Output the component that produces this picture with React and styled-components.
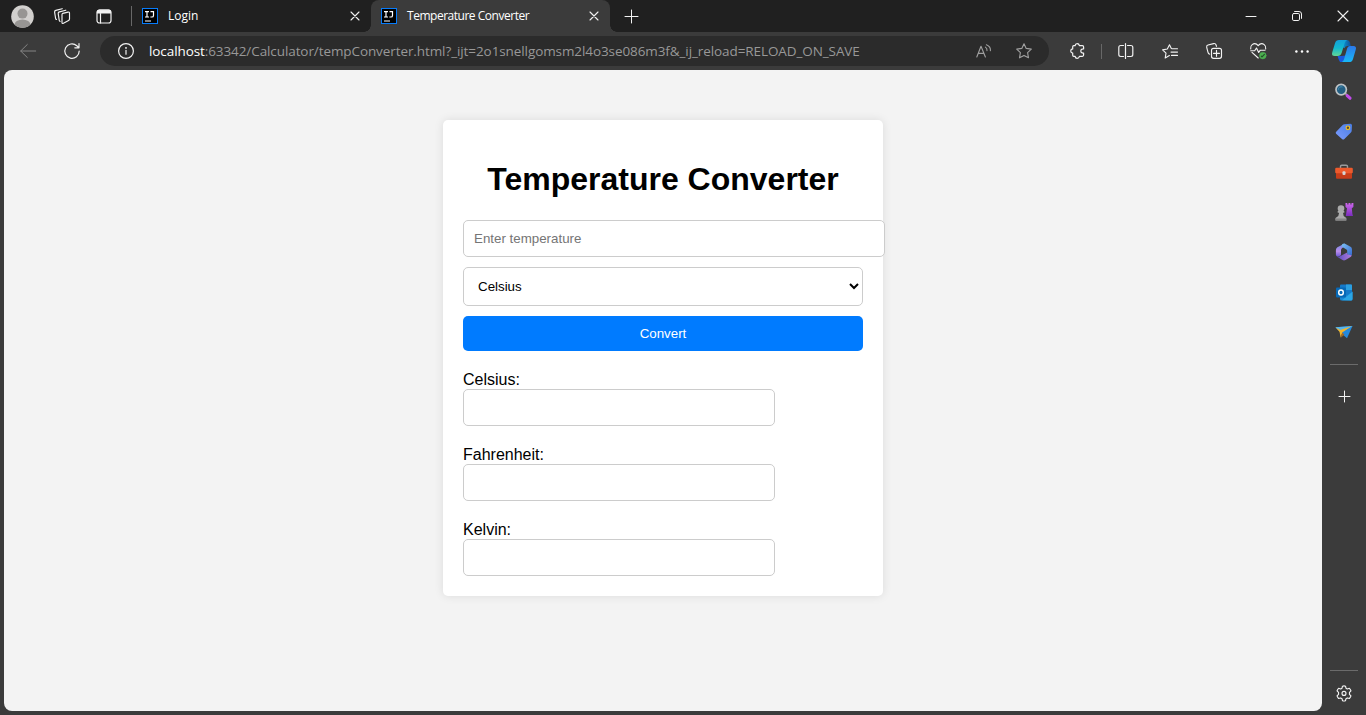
import React from 'react';
import styled, { createGlobalStyle } from 'styled-components';

const GlobalStyle = createGlobalStyle`
  * { box-sizing: border-box; }
  body { margin: 0; overflow: hidden; background: #3b3b3b; }
`;

const ui = `'Segoe UI', 'Open Sans', 'Noto Sans', sans-serif`;

const Browser = styled.div`
  width: 1366px;
  height: 715px;
  display: flex;
  flex-direction: column;
  background: #3b3b3b;
  color: #fff;
  font-family: ${ui};
`;

const TabBar = styled.header`
  display: flex;
  height: 32px;
  background: #202020;
`;

const Slot = styled.div`
  width: ${p => p.$w || 44}px;
  height: ${p => (p.$h ? p.$h + 'px' : 'auto')};
  flex: none;
  display: flex;
  align-items: center;
  justify-content: center;
  color: ${p => p.$color || '#f2f2f2'};
  svg { display: block; overflow: visible; }
`;

const Divider = styled.div`
  width: 1px;
  height: ${p => p.$h}px;
  margin: ${p => p.$m || 0};
  align-self: center;
  background: #686868;
`;

const Tab = styled.div`
  width: 239px;
  height: 32px;
  padding: 0 10px 0 10px;
  display: flex;
  align-items: center;
  position: relative;
  border-radius: 8px 8px 0 0;
  background: ${p => (p.$active ? '#3b3b3b' : 'transparent')};
  &::before, &::after {
    content: '';
    display: ${p => (p.$active ? 'block' : 'none')};
    position: absolute;
    bottom: 0;
    width: 7px;
    height: 7px;
  }
  &::before { left: -7px; background: radial-gradient(circle at 0 0, transparent 6.5px, #3b3b3b 7px); }
  &::after { right: -7px; background: radial-gradient(circle at 100% 0, transparent 6.5px, #3b3b3b 7px); }
`;

const TabTitle = styled.span`
  flex: 1;
  margin-left: 10px;
  font-size: 12px;
  line-height: 16px;
  letter-spacing: ${p => p.$spacing || 0}px;
  white-space: nowrap;
`;

const Spacer = styled.div`
  flex: 1;
`;

const Toolbar = styled.nav`
  display: flex;
  align-items: stretch;
  height: 38px;
  padding-left: 6px;
`;

const AddressBar = styled.div`
  width: 949px;
  height: 30px;
  margin: 4px 6px 4px;
  padding: 0 5px 0 4px;
  display: flex;
  border-radius: 15px;
  background: #2b2b2b;
`;

const Url = styled.div`
  flex: 1;
  margin-left: 1px;
  font-size: 13.5px;
  line-height: 30px;
  letter-spacing: -0.09px;
  white-space: nowrap;
  color: #989898;
  b { font-weight: 400; color: #fff; }
`;

const Body = styled.div`
  display: flex;
  flex: 1;
  min-height: 0;
`;

const Viewport = styled.main`
  width: 1318px;
  height: 641px;
  margin-left: 4px;
  padding-top: 50px;
  border-radius: 8px;
  background: #f3f3f3;
`;

const SideBar = styled.aside`
  width: 44px;
  padding: 2px 0 2px;
  display: flex;
  flex-direction: column;
  align-items: center;
`;

const Rule = styled.div`
  width: 28px;
  height: 1px;
  margin: ${p => p.$m};
  background: #6b6b6b;
`;

const Card = styled.form`
  width: 440px;
  height: 476px;
  margin: 0 auto;
  padding: 20px;
  border-radius: 5px;
  background: #fff;
  box-shadow: 0 0 10px rgba(0, 0, 0, 0.1);
  color: #000;
  font: 16px 'Liberation Sans', Arial, sans-serif;
`;

const Title = styled.h1`
  margin: 21px 0 22px;
  font-size: 32px;
  line-height: 37px;
  text-align: center;
  white-space: nowrap;
`;

const Field = styled.input`
  display: block;
  width: ${p => p.$w}px;
  height: 37px;
  padding: 10px;
  border: 1px solid #ccc;
  border-radius: 5px;
  background: #fff;
  font: 13.333px 'Liberation Sans', Arial, sans-serif;
  &::placeholder { color: #757575; opacity: 1; }
`;

const UnitSelect = styled.select`
  display: block;
  width: 400px;
  height: 39px;
  margin: 10px 0;
  padding: 10px;
  border: 1px solid #ccc;
  border-radius: 5px;
  background: #fff;
  color: #000;
  font: 13.333px 'Liberation Sans', Arial, sans-serif;
`;

const ConvertButton = styled.button`
  display: block;
  width: 400px;
  height: 35px;
  padding: 0;
  border: 0;
  border-radius: 5px;
  background: #007bff;
  color: #fff;
  font: 13.333px 'Liberation Sans', Arial, sans-serif;
`;

const Result = styled.label`
  display: block;
  margin-top: 20px;
  line-height: 18px;
`;

const Line = ({ w = 16, h = w, sw = 1, box, children }) => (
  <svg width={w} height={h} viewBox={box || `0 0 ${w} ${h}`} fill="none" stroke="currentColor" strokeWidth={sw} strokeLinecap="round" strokeLinejoin="round">
    {children}
  </svg>
);

const Avatar = () => (
  <svg width="23" height="23" viewBox="0 0 23 23">
    <defs><clipPath id="face"><circle cx="11.5" cy="11.5" r="11.3" /></clipPath></defs>
    <circle cx="11.5" cy="11.5" r="11.3" fill="#d2d0ce" />
    <g clipPath="url(#face)" fill="#979593">
      <circle cx="11.5" cy="8.6" r="5" />
      <ellipse cx="11.5" cy="19.8" rx="8" ry="5.2" />
    </g>
  </svg>
);

const Workspaces = () => (
  <Line w={16} h={16} sw={1.15}>
    <path d="M8.8 5.4 14 4.1Q15.5 3.8 15.5 5.2V11Q15.5 12 14.6 12.4L9.4 15.3Q8 15.9 8 14.4V6.5Q8 5.7 8.8 5.4Z" />
    <path d="M11.8 2.2 5.4 3.9Q4 4.3 4.2 5.6L5.2 12.2Q5.4 13.3 6.1 13.3" />
    <path d="M8.2.7 1.8 2.4Q.4 2.8.6 4.1L1.6 10.3Q1.8 11.4 2.5 11.4" />
  </Line>
);

const TabActions = () => (
  <Line w={16} h={15} sw={1.2}>
    <rect x="1" y="1" width="14" height="13" rx="2.5" />
    <path d="M1.5 3.2A2 2 0 0 1 3.5 1.2H12.5A2 2 0 0 1 14.5 3.2V4H1.5Z" fill="currentColor" />
    <path d="M4.5 4.5V14" />
  </Line>
);

const FaviconBox = styled.span`
  width: 16px;
  height: 16px;
  flex: none;
  padding: 1px 0 0 2px;
  border: 1px solid #087cfa;
  background: #000;
  svg { display: block; }
`;

const Favicon = () => (
  <FaviconBox>
    <svg width="11" height="12" viewBox="0 0 11 12" fill="none" stroke="#fff" strokeWidth="1.2">
      <path d="M0 1.6H4M2 1.6V7M0 7H4M5.5 1.6H8.5V5.4Q8.5 7 7 7H5.4M0 11H6" />
    </svg>
  </FaviconBox>
);

const Cross = ({ s = 8, sw = 1.1 }) => (
  <Line w={s} sw={sw}><path d={`M0 0 ${s} ${s}M${s} 0 0 ${s}`} /></Line>
);

const Plus = ({ s = 13 }) => (
  <Line w={s} sw={1}><path d={`M${s / 2} 0V${s}M0 ${s / 2}H${s}`} /></Line>
);

const Back = () => <Line w={16} h={14}><path d="M7.3.5.7 7l6.6 6.5M.8 7H15.7" /></Line>;

const Reload = () => (
  <Line w={16} h={16} sw={1.2}><path d="M15.2 8A7.2 7.2 0 1 1 12.8 2.7L15 4.7M15 .6V4.8H10.8" /></Line>
);

const Info = () => (
  <Line w={16} sw={1.2}>
    <circle cx="8" cy="8" r="7.4" />
    <path d="M8 7.4V11.2" />
    <circle cx="8" cy="4.9" r=".35" fill="currentColor" />
  </Line>
);

const ReadAloud = () => (
  <Line w={16} h={14} sw={1.1}>
    <path d="M.8 13 5 2.2 9.4 13M2.3 9.4H7.8M9.4 3.1Q11.3 4.4 11 6.6M10.4.8Q14.9 2.6 14.4 6.8" />
  </Line>
);

const starPath = 'M8 .8 10.2 5.4 15.3 6.1 11.6 9.7 12.5 14.8 8 12.4 3.5 14.8 4.4 9.7 .7 6.1 5.8 5.4Z';
const Star = () => <Line w={16} h={16} sw={1.1}><path d={starPath} /></Line>;

const Puzzle = () => (
  <Line w={15} h={16} sw={1.2}>
    <path d="M3.7 2.7H5.1C5.3 1.3 6.2.7 7.2.7S9.1 1.3 9.4 2.7H12.4Q13.6 2.7 13.6 3.9V6C11.6 5.8 10.8 6.8 10.8 8S11.6 10.2 13.6 10V12.1Q13.6 13.3 12.4 13.3H9.4C9.1 14.7 8.2 15.3 7.2 15.3S5.3 14.7 5.1 13.3H3.7Q2.7 13.3 2.7 12.3V10.1C1.3 9.9.7 9 .7 8S1.3 6.1 2.7 5.9V3.7Q2.7 2.7 3.7 2.7" />
  </Line>
);

const Split = () => (
  <Line w={16} h={16} sw={1.2}>
    <path d="M5.5 2.5H2.7Q.8 2.5.8 4.4V11.6Q.8 13.5 2.7 13.5H5.5M9.5 2.5H12.9Q14.8 2.5 14.8 4.4V11.6Q14.8 13.5 12.9 13.5H9.5M7.5 .5V15.5" />
  </Line>
);

const Favorites = () => (
  <Line w={16} h={15} sw={1.1}>
    <path d="M9.3 4.5 7.5.8 5.3 5 .6 5.9 4 9.2 3.2 14 7.4 11.6M10 4.8H15.5M9 8.1H15.5M9.5 11.4H15.5" />
  </Line>
);

const Collections = () => (
  <Line w={16} h={16} sw={1.15}>
    <rect x="5.5" y="5.3" width="10" height="10" rx="2" />
    <path d="M10.5 7.3V13.3M7.5 10.3H13.5M3.7 11.2Q2.3 10.8 2 9.4L.7 4.3Q.3 2.5 2 2L7.6.6Q9.5.2 10.1 2L10.5 3.3" />
  </Line>
);

const Health = () => (
  <Line w={17} h={16} sw={1.15}>
    <path d="M.7 6Q.2 3.1 2.2 1.6C4.2.2 6.4.5 8.2 2.7 10 .5 12.2.2 14.2 1.6Q16.2 3.1 15.7 6M2 9.3 8.2 15M.7 7.7H4.7L6.5 5 8.7 9.5 10.3 7.2H15" />
    <circle cx="12.8" cy="12.6" r="3.4" fill="#4caf50" stroke="#4caf50" strokeWidth=".4" />
    <path d="m11.3 13.1.7.7 2.4-2.5" stroke="#234f28" />
  </Line>
);

const Dots = () => (
  <svg width="14" height="3" viewBox="0 0 14 3" fill="#fff">
    <circle cx="1.4" cy="1.5" r="1.2" /><circle cx="7" cy="1.5" r="1.2" /><circle cx="12.6" cy="1.5" r="1.2" />
  </svg>
);

const Copilot = () => (
  <svg width="24" height="23" viewBox="0 0 24 23">
    <defs>
      <linearGradient id="cpA" x1="0" y1="0" x2="0" y2="1"><stop stopColor="#149fd9" /><stop offset=".5" stopColor="#12b9cf" /><stop offset="1" stopColor="#63d794" /></linearGradient>
      <linearGradient id="cpB" x1="0" y1="0" x2="0" y2="1"><stop stopColor="#2c78e8" /><stop offset="1" stopColor="#18b9f7" /></linearGradient>
      <linearGradient id="cpC"><stop stopColor="#0a97d6" /><stop offset="1" stopColor="#124e94" /></linearGradient>
    </defs>
    <path d="M11 0H15Q17.3 0 18 2.6L18.8 6H15.6Q13.2 6 12.4 8.2L10.5 7Z" fill="url(#cpC)" />
    <path d="M5.6 16.1H9.5L13.4 15.5 12.5 22.1H9.7Q7.4 22.1 6.7 19.4Z" fill="#1959df" />
    <path d="M7 0H15Q13.4.7 12.6 3.2L9.7 12.8Q8.6 16.1 5.6 16.1H2.8Q-.8 16.1.2 12.6L3 3.2Q4 0 7 0Z" fill="url(#cpA)" />
    <path d="M18 6H21.4Q24.8 6 23.8 9.5L21 18.9Q20 22.1 17 22.1H9.8Q11.4 21.4 12.1 19L14.9 9.3Q15.8 6 18 6Z" fill="url(#cpB)" />
  </svg>
);

const SearchIcon = () => (
  <svg width="18" height="18" viewBox="0 0 18 18">
    <path d="M10 10 12.2 12.2" stroke="#9a9a9a" strokeWidth="1.8" />
    <path d="M12.2 12.6 15 15.2" stroke="#c04be9" strokeWidth="3.2" strokeLinecap="round" />
    <circle cx="6.2" cy="6.6" r="5.2" fill="#245f83" stroke="#bdc2c5" strokeWidth="1.7" />
    <path d="M3.3 6.8A3 3 0 0 1 7.5 4" stroke="#438bb0" fill="none" />
  </svg>
);

const TagIcon = () => (
  <svg width="18" height="18" viewBox="0 0 18 18">
    <defs><linearGradient id="tag" x1="1" y1="0" x2="0" y2="1"><stop stopColor="#487de4" /><stop offset="1" stopColor="#7d9cff" /></linearGradient></defs>
    <path d="M9.4 1.2 15.4.7Q17 .7 17 2.3L16.7 7.7Q16.6 8.7 15.9 9.4L9.4 16Q8.2 17.2 7 16L1.1 10.8Q.2 9.8 1.2 8.7L7.7 2Q8.4 1.3 9.4 1.2Z" fill="url(#tag)" />
    <circle cx="12.9" cy="4.8" r="1.8" fill="#564a32" stroke="#f1bf22" strokeWidth="1.2" />
  </svg>
);

const ToolboxIcon = () => (
  <svg width="18" height="16" viewBox="0 0 18 16">
    <path d="M5.5 4V2.5Q5.5 1.2 6.8 1.2H11.2Q12.5 1.2 12.5 2.5V4" stroke="#9a9b9c" strokeWidth="1.4" fill="none" />
    <rect x="1" y="8" width="16" height="6.8" rx="1" fill="#c63d1a" />
    <path d="M1.3 3.8H16.7Q17.8 3.8 17.8 5V8.2Q17.8 9.2 16.5 9.2H1.5Q.2 9.2.2 8.2V5Q.2 3.8 1.3 3.8Z" fill="#ed5a2c" />
    <rect x="7.5" y="7.3" width="3" height="3.6" rx="1" fill="#d5d5d5" />
  </svg>
);

const GamesIcon = () => (
  <svg width="19" height="18" viewBox="0 0 19 18">
    <defs><linearGradient id="rook" x1="0" y1="0" x2="0" y2="1"><stop stopColor="#cf67ed" /><stop offset="1" stopColor="#7b2dbe" /></linearGradient></defs>
    <path d="M10.5 0H12.3V1.5H13.5V0H15.4V1.5H16.5V0H18.4V4L16.8 5.2 17.4 11 18 13H10.8L12 5.2 10.5 4Z" fill="url(#rook)" />
    <g fill="#aaa"><circle cx="6" cy="5.5" r="3.3" /><path d="M2.7 8.1H9.3V9.8H8L8.7 13 11.3 15V17.5H.5V15L3.3 13 4.1 9.8H2.7Z" /></g>
    <path d="M.5 15.5H11.3V17.5H.5Z" fill="#858585" />
  </svg>
);

const OfficeIcon = () => (
  <svg width="18" height="18" viewBox="0 0 18 18">
    <defs>
      <linearGradient id="office" x1="0" y1="0" x2="0" y2="1"><stop stopColor="#6f8ee6" /><stop offset=".6" stopColor="#b98bea" /><stop offset="1" stopColor="#6857d5" /></linearGradient>
      <linearGradient id="officeR" x1="0" y1="0" x2="1" y2="1"><stop stopColor="#7cc0f3" /><stop offset="1" stopColor="#3568cf" /></linearGradient>
      <linearGradient id="officeB"><stop stopColor="#5b4fc0" /><stop offset="1" stopColor="#b47be0" /></linearGradient>
    </defs>
    <path d="M9.8.5 2.4 4.3Q.9 5.2.9 7V11.5Q.9 14 3.4 13.6L6 12.3V7.2Q6 5.7 7.2 5L10.5 3Z" fill="url(#office)" />
    <path d="M7.5.9Q9 .1 10.5.9L15.5 3.8Q17 4.7 17 6.4V11Q17 13 15 13L12.2 11.3V7.8Q12.2 6.9 11.4 6.4L7 3.8Q6 2 7.5.9Z" fill="url(#officeR)" />
    <path d="M3.1 13.7Q4.2 13.7 5 13.2L12.2 9.6V11.3L16.8 12.6Q16.5 13.4 15.5 14L10.5 17Q9 17.8 7.5 17L2.5 14Z" fill="url(#officeB)" />
  </svg>
);

const OutlookIcon = () => (
  <svg width="17" height="17" viewBox="0 0 17 17">
    <rect x="4" y=".5" width="12" height="11.5" rx="1" fill="#1479c9" />
    <path d="M10 .5H15Q16 .5 16 1.5V6H10Z" fill="#2b9fe0" />
    <path d="M4 8 10.5 11.5 16.5 7.5V15Q16.5 16.5 15 16.5H5.5Q4 16.5 4 15Z" fill="#1687d3" />
    <path d="m6 16.3 10.5-8.6V15Q16.5 16.5 15 16.5Z" fill="#2aa6e6" />
    <rect x="0" y="3.5" width="10" height="10" rx="1" fill="#0669b7" />
    <ellipse cx="5" cy="8.5" rx="2.3" ry="2.5" fill="none" stroke="#fff" strokeWidth="1.4" />
  </svg>
);

const SendIcon = () => (
  <svg width="18" height="14" viewBox="0 0 18 14">
    <path d="M.5 2.2 17.5.9 12 13.2 8.5 10.3Z" fill="#2389dd" />
    <path d="M.5 2.2 17.5.9 6 7.5Z" fill="#55b5ef" />
    <path d="M.5 2.2 5.2 4.9 16.5 1.2 7.2 7.5 5.8 12.7 4.5 6.8Z" fill="#f3b529" />
    <path d="M5.8 12.7 7.2 7.5 9.5 9.6Z" fill="#a46b24" />
  </svg>
);

const Gear = () => (
  <Line w={16} h={17} box="0 0 17 18" sw={1.2}>
    <path d="M6.9 1.2Q8.5.6 10.1 1.2L10.6 3.4 12 4.2 14.2 3.5Q15.4 4.7 15.9 6.3L14.3 7.9V9.9L15.9 11.5Q15.4 13.1 14.2 14.3L12 13.7 10.6 14.5 10.1 16.7Q8.5 17.2 6.9 16.7L6.4 14.5 5 13.7 2.8 14.3Q1.6 13.1 1.1 11.5L2.7 9.9V7.9L1.1 6.3Q1.6 4.7 2.8 3.5L5 4.2 6.4 3.4Z" />
    <circle cx="8.5" cy="8.9" r="2.1" />
  </Line>
);

const Restore = () => (
  <Line w={10} h={10}><rect x=".5" y="2.5" width="7" height="7" rx="1.3" /><path d="M2.6.5H7Q9.5.5 9.5 3V7.4" /></Line>
);

const sideIcons = [SearchIcon, TagIcon, ToolboxIcon, GamesIcon, OfficeIcon, OutlookIcon, SendIcon];

export default function App() {
  return (
    <Browser>
      <GlobalStyle />
      <TabBar>
        <Slot $w={44}><Avatar /></Slot>
        <Slot $w={36}><Workspaces /></Slot>
        <Slot $w={48}><TabActions /></Slot>
        <Divider $h={20} $m="0 0 0 3px" />
        <Tab>
          <Favicon />
          <TabTitle>Login</TabTitle>
          <Slot $w={12}><Cross /></Slot>
        </Tab>
        <Tab $active>
          <Favicon />
          <TabTitle $spacing={-0.48}>Temperature Converter</TabTitle>
          <Slot $w={12}><Cross /></Slot>
        </Tab>
        <Slot $w={43}><Plus /></Slot>
        <Spacer />
        <Slot $w={46}><Line w={10} h={1}><path d="M0 .5H10" /></Line></Slot>
        <Slot $w={46}><Restore /></Slot>
        <Slot $w={46}><Cross s={10} /></Slot>
      </TabBar>
      <Toolbar>
        <Slot $color="#858585"><Back /></Slot>
        <Slot><Reload /></Slot>
        <AddressBar>
          <Slot><Info /></Slot>
          <Url><b>localhost</b>:63342/Calculator/tempConverter.html?_ijt=2o1snellgomsm2l4o3se086m3f&amp;_ij_reload=RELOAD_ON_SAVE</Url>
          <Slot $w={40} $color="#a0a0a0"><ReadAloud /></Slot>
          <Slot $w={40} $color="#a0a0a0"><Star /></Slot>
        </AddressBar>
        <Slot><Puzzle /></Slot>
        <Slot $w={5}><Divider $h={15} /></Slot>
        <Slot><Split /></Slot>
        <Slot><Favorites /></Slot>
        <Slot><Collections /></Slot>
        <Slot><Health /></Slot>
        <Slot><Dots /></Slot>
        <Slot $w={40}><Copilot /></Slot>
      </Toolbar>
      <Body>
        <Viewport>
          <Card>
            <Title>Temperature Converter</Title>
            <Field $w={422} placeholder="Enter temperature" />
            <UnitSelect defaultValue="Celsius">
              <option>Celsius</option>
              <option>Fahrenheit</option>
              <option>Kelvin</option>
            </UnitSelect>
            <ConvertButton type="button">Convert</ConvertButton>
            {['Celsius', 'Fahrenheit', 'Kelvin'].map(unit => (
              <Result key={unit}>{unit}:<Field $w={312} readOnly /></Result>
            ))}
          </Card>
        </Viewport>
        <SideBar>
          {sideIcons.map((Icon, i) => <Slot key={i} $h={40}><Icon /></Slot>)}
          <Rule $m="12px 0 11px" />
          <Slot $h={40}><Plus s={11} /></Slot>
          <Spacer />
          <Rule $m="0 0 2px" />
          <Slot $h={40}><Gear /></Slot>
        </SideBar>
      </Body>
    </Browser>
  );
}
